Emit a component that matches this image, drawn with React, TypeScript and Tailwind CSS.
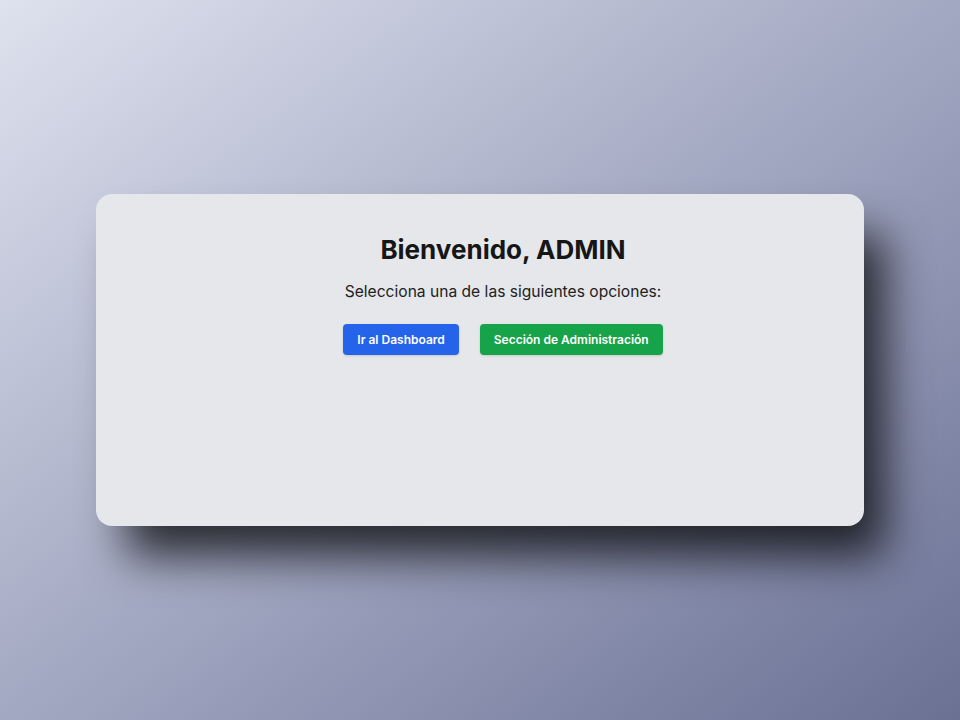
export default function App() {
  return (
    <div className="min-h-screen w-full bg-linear-to-br from-[#dee2ee] via-[#a3a8c2] to-[#6a7193] flex items-center justify-center font-['Inter',sans-serif]">
      <div className="w-[768px] h-[332px] bg-[#e5e7eb] rounded-2xl shadow-[25px_35px_45px_-5px_rgba(0,0,0,0.75)] flex flex-col items-center pt-10 pl-[46px]">
        <h1 className="text-[26px] font-bold text-[#161616] leading-8">Bienvenido, ADMIN</h1>
        <p className="mt-3.5 text-[15.6px] leading-6 text-[#222]">Selecciona una de las siguientes opciones:</p>
        <div className="mt-5 flex gap-[21px]">
          <button className="bg-[#2563eb] text-white text-xs leading-[15px] font-semibold px-3.5 py-2 rounded shadow-sm">
            Ir al Dashboard
          </button>
          <button className="bg-[#16a34a] text-white text-xs leading-[15px] font-semibold px-3.5 py-2 rounded shadow-sm">
            Sección de Administración
          </button>
        </div>
      </div>
    </div>
  );
}
